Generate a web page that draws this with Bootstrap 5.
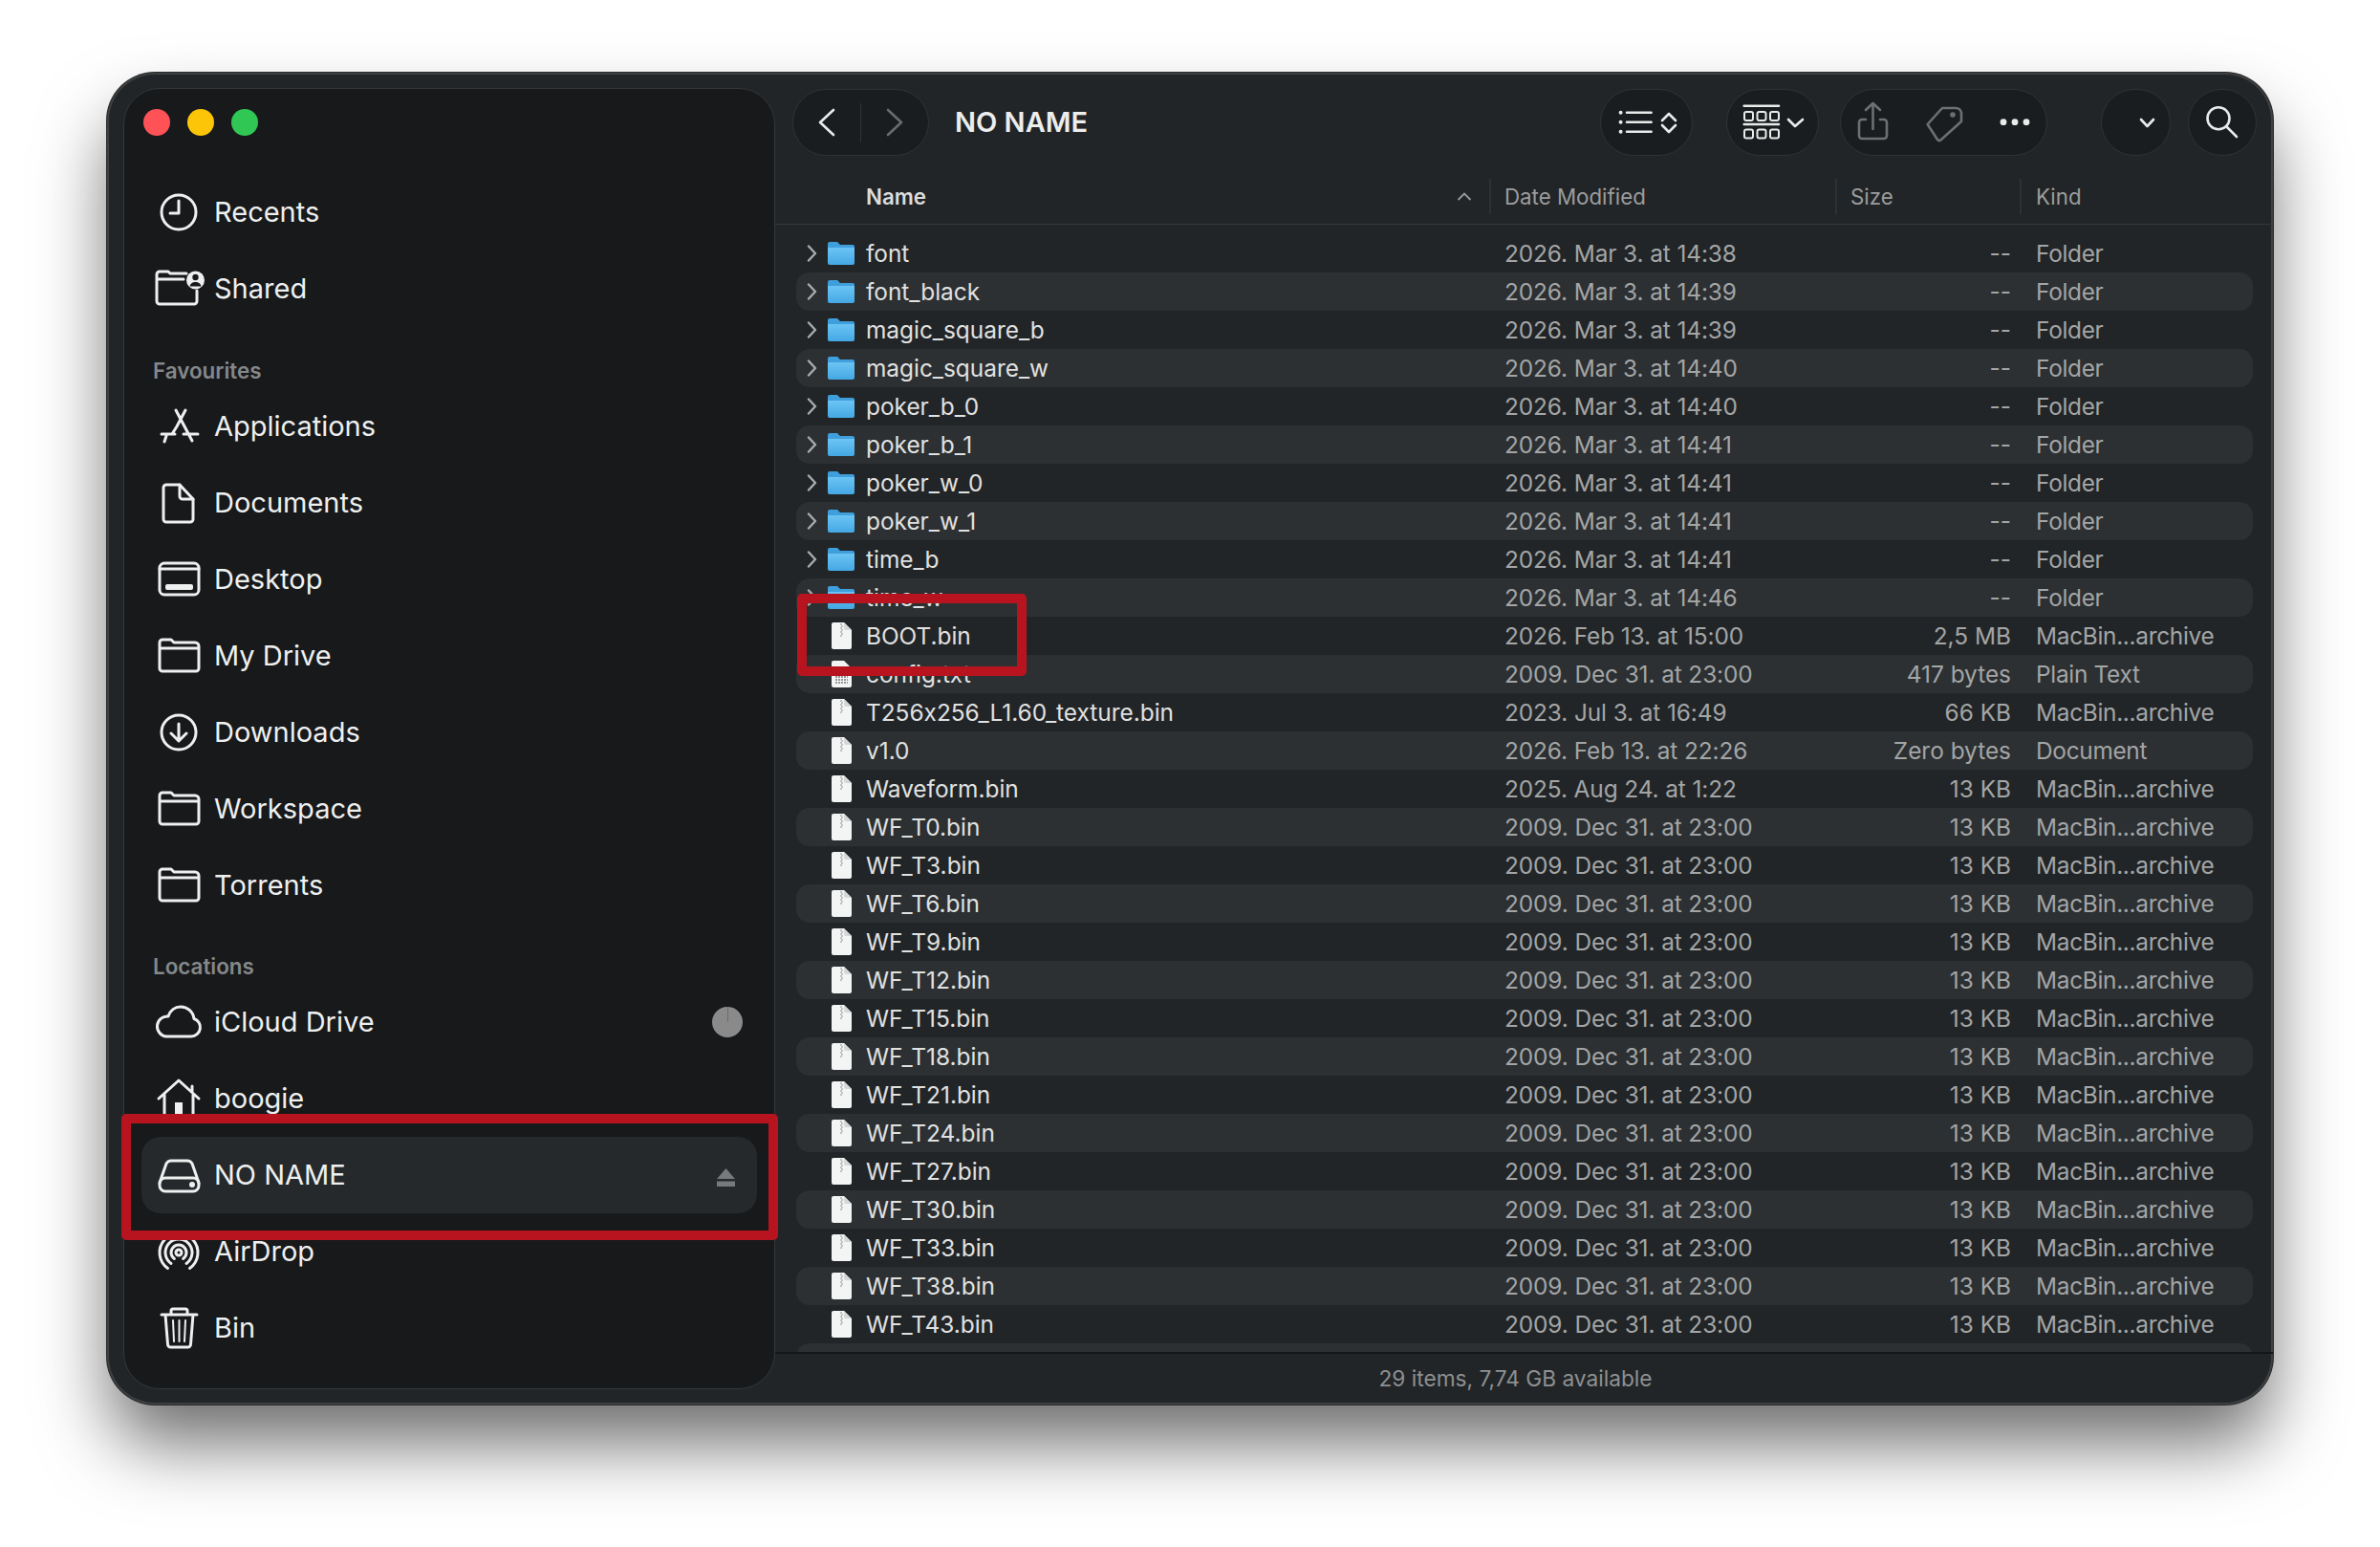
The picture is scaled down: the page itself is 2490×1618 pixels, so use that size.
<!DOCTYPE html>
<html lang="en">
<head>
    <meta charset="UTF-8">
    <title>NO NAME</title>
    <link href="https://cdn.jsdelivr.net/npm/bootstrap@5.3.0/dist/css/bootstrap.min.css" rel="stylesheet">
    <style>
        html, body { height: 100%; }
        body { background: #fff; font-family: Inter, "Liberation Sans", sans-serif; font-variant-ligatures: no-contextual; overflow: hidden; }
        .mac-window { width: 2266px; height: 1393px; margin: 76px 0 0 112px; background: #222527; border-radius: 50px; box-shadow: inset 0 0 0 2px #3d3f41, 0 0 0 1px #2a2a2a, 0 44px 76px -4px rgba(0,0,0,.58); }
        .side-panel { width: 682px; margin: 16px 0 16px 17px; background: #17191b; border: 1px solid #34383a; border-radius: 38px; padding: 21px 18px 0; flex: none; }
        .lights { height: 28px; margin: 0 0 40px 2px; gap: 18px; }
        .light { width: 28px; height: 28px; border-radius: 50%; }
        .light-red { background: #ff5257; }
        .light-yellow { background: #fdc507; }
        .light-green { background: #31c755; }
        .side-item { height: 80px; padding: 0 15px 0 13px; gap: 11px; color: #eef0f0; font-size: 29px; border-radius: 20px; text-decoration: none; }
        .side-item svg { width: 52px; height: 44px; flex: none; fill: none; stroke: #eef0f0; stroke-width: 3; stroke-linecap: round; stroke-linejoin: round; overflow: visible; }
        .side-item.active { background: #25292b; }
        .side-head { height: 64px; padding: 28px 0 0 12px; color: #85888a; font-size: 22.4px; font-weight: 600; line-height: 36px; }
        .side-head-loc { height: 63px; padding-top: 27px; }
        .side-progress { width: 32px; height: 32px; background: linear-gradient(#6b6b6b, #6b6b6b) center top / 1px 50% no-repeat, #8a8a8a; border-radius: 50%; }
        .main-panel { min-width: 0; }
        .toolbar { height: 101px; padding: 17px 17px 0 18px; flex: none; }
        .tool-pill { height: 70px; background: #1a1d1f; border: 1px solid #303335; border-radius: 35px; flex: none; }
        .tool-pill svg { display: block; fill: none; stroke: #e9eaea; stroke-width: 2.6; stroke-linecap: round; stroke-linejoin: round; }
        .nav-pill { width: 143px; }
        .nav-pill .btn { width: 70px; }
        .nav-split { width: 1px; height: 41px; background: #303335; }
        .win-title { height: 70px; margin-left: 27px; color: #eceded; font-size: 29px; font-weight: 600; }
        .ms-view { margin-left: 35px; }
        .ms-share { margin-left: 22px; }
        .ms-more { margin-left: 56px; }
        .ms-search { margin-left: 18px; }
        .table-head { height: 58px; padding-left: 95px; color: #9b9d9e; font-size: 22.3px; border-bottom: 1px solid #35383a; flex: none; }
        .head-cell { height: 37px; }
        .head-name { width: 654px; margin-right: 14px; padding-right: 18px; color: #dcdddd; font-weight: 600; border-right: 2px solid #2e3133; }
        .head-date { width: 348px; margin-right: 14px; border-right: 2px solid #2e3133; }
        .head-size { width: 179px; margin-right: 15px; border-right: 2px solid #2e3133; }
        .file-list { margin: 0 21px 0 22px; padding-top: 10px; min-height: 0; }
        .file-row { height: 40px; flex: none; border-radius: 14px; color: #a3a5a6; font-size: 24.4px; white-space: nowrap; }
        .file-row:nth-child(even) { background: #2c3032; }
        .row-arrow { width: 16px; margin-left: 9px; flex: none; }
        .row-icon { width: 28px; margin: 0 12px 0 8px; flex: none; display: flex; justify-content: center; }
        .cell-name { width: 668px; color: #e0e1e1; flex: none; }
        .cell-date { width: 380px; flex: none; letter-spacing: -.1px; }
        .cell-size { width: 150px; flex: none; }
        .cell-kind { margin-left: 26px; letter-spacing: -.3px; }
        .status-bar { height: 55px; padding-right: 18px; margin-top: auto; color: #8e9091; font-size: 22.7px; border-top: 2px solid #131517; flex: none; }
        .mark-box { position: absolute; border: 10px solid #b8141f; border-radius: 5px; pointer-events: none; }
        .mark-side { left: 15px; top: 1089px; width: 687px; height: 132px; }
        .mark-file { left: 722px; top: 545px; width: 240px; height: 86px; }
    </style>
</head>
<body>
    <svg width="0" height="0" class="position-absolute">
        <defs>
            <linearGradient id="blueFront" x1="0" y1="0" x2="0" y2="1">
                <stop offset="0" stop-color="#6cc4f4"/>
                <stop offset="1" stop-color="#44a8e4"/>
            </linearGradient>
            <symbol id="i-arrow" viewBox="0 0 16 18"><path d="M4 1.500 11 9 4 16.500" fill="none" stroke="#a9abac" stroke-width="2.400" stroke-linecap="round" stroke-linejoin="round"/></symbol>
            <symbol id="i-blue" viewBox="0 0 28 24"><path d="M2 0h8l3 3h13a2 2 0 0 1 2 2v6H0V2a2 2 0 0 1 2-2z" fill="#3f9fdc"/><path d="M0 6h28v16a2 2 0 0 1-2 2H2a2 2 0 0 1-2-2z" fill="url(#blueFront)"/></symbol>
            <symbol id="i-doc" viewBox="0 0 21 28"><path d="M2 0h11l8 8v18a2 2 0 0 1-2 2H2a2 2 0 0 1-2-2V2a2 2 0 0 1 2-2z" fill="#f3f4f4"/><path d="M13 0l8 8h-6a2 2 0 0 1-2-2z" fill="#d5d7d8"/><path d="M9 2h2M10 4h2M9 6h2M10 8h2M9 10h2M10 12h2M9 14h2" stroke="#8e9092" stroke-width="1.200"/></symbol>
            <symbol id="i-txt" viewBox="0 0 21 28"><path d="M2 0h11l8 8v18a2 2 0 0 1-2 2H2a2 2 0 0 1-2-2V2a2 2 0 0 1 2-2z" fill="#f3f4f4"/><path d="M4 8h9M4 11h13M4 14h13M4 17h13M4 20h13M4 23h13" stroke="#77797b" stroke-width="1.400" stroke-dasharray="2 1"/></symbol>
            <symbol id="i-folder" viewBox="0 0 52 44"><path d="M9 5h9l3 3h22a4 4 0 0 1 4 4v23a3 3 0 0 1-3 3H9a3 3 0 0 1-3-3V8a3 3 0 0 1 3-3z"/><path d="M7 14h39"/></symbol>
        </defs>
    </svg>

    <div class="mac-window d-flex position-relative">
        <aside class="side-panel d-flex flex-column overflow-hidden">
            <div class="lights d-flex">
                <span class="light light-red"></span>
                <span class="light light-yellow"></span>
                <span class="light light-green"></span>
            </div>
            <nav class="nav flex-column flex-nowrap">
                <a class="side-item d-flex align-items-center" href="#">
                    <svg viewBox="0 0 52 44"><circle cx="26" cy="22" r="18"/><path d="M26 10v13h-9"/></svg>Recents
                </a>
                <a class="side-item d-flex align-items-center" href="#">
                    <svg viewBox="0 0 52 44"><path d="M34 6H17l-2-2H6a3 3 0 0 0-3 3v28a3 3 0 0 0 3 3h36a3 3 0 0 0 3-3V24"/><path d="M4 12h27"/><circle cx="43.500" cy="13" r="9.500" fill="#eef0f0" stroke="none"/><circle cx="43.500" cy="10" r="3.200" fill="#17191b" stroke="none"/><path d="M37.500 19.500c1-3.500 3.200-4.500 6-4.500s5 1 6 4.500" fill="#17191b" stroke="none"/></svg>Shared
                </a>
                <div class="side-head">Favourites</div>
                <a class="side-item d-flex align-items-center" href="#">
                    <svg viewBox="0 0 52 44"><path d="M23 5l17 32M33 5l-9 17-5 8M13 32l-2 6M8 30h14M31 30h15"/></svg>Applications
                </a>
                <a class="side-item d-flex align-items-center" href="#">
                    <svg viewBox="0 0 52 44"><path d="M13 3h14l14 15v21a3 3 0 0 1-3 3H13a3 3 0 0 1-3-3V6a3 3 0 0 1 3-3z"/><path d="M27 3v12a3 3 0 0 0 3 3h11"/></svg>Documents
                </a>
                <a class="side-item d-flex align-items-center" href="#">
                    <svg viewBox="0 0 52 44"><rect x="6" y="5" width="41" height="33" rx="5"/><path d="M6 11h41"/><rect x="12" y="27" width="29" height="6" rx="2" fill="#eef0f0" stroke="none"/></svg>Desktop
                </a>
                <a class="side-item d-flex align-items-center" href="#"><svg><use href="#i-folder"/></svg>My Drive</a>
                <a class="side-item d-flex align-items-center" href="#">
                    <svg viewBox="0 0 52 44"><circle cx="26" cy="22" r="18"/><path d="M26 13v18M18 23l8 8 8-8"/></svg>Downloads
                </a>
                <a class="side-item d-flex align-items-center" href="#"><svg><use href="#i-folder"/></svg>Workspace</a>
                <a class="side-item d-flex align-items-center" href="#"><svg><use href="#i-folder"/></svg>Torrents</a>
                <div class="side-head side-head-loc">Locations</div>
                <a class="side-item d-flex align-items-center" href="#">
                    <svg viewBox="0 0 52 44"><path d="M13 37h26a9.500 9.500 0 0 0 3-18.500C41 11 35 6 28 6c-6 0-11 4-13 10a10.500 10.500 0 0 0-2 21z"/></svg>iCloud Drive
                    <span class="side-progress ms-auto"></span>
                </a>
                <a class="side-item d-flex align-items-center" href="#">
                    <svg viewBox="0 0 52 44"><path d="M5 22 26 3l21 19M40 9v6M11 18v25h30V18"/><rect x="22" y="26" width="8" height="17" fill="#eef0f0" stroke="none"/></svg>boogie
                </a>
                <a class="side-item active d-flex align-items-center" href="#">
                    <svg viewBox="0 0 52 44"><path d="M6 30l7-20a6 6 0 0 1 5-3h17a6 6 0 0 1 5 3l7 20"/><rect x="6" y="25" width="41" height="14" rx="6"/><circle cx="40" cy="32" r="1.500" fill="#eef0f0"/></svg>NO NAME
                    <svg class="ms-auto" viewBox="0 0 52 44"><path d="M25 26h19l-9.500-11zM25 28.500h19V34H25z" fill="#77797b" stroke="none"/></svg>
                </a>
                <a class="side-item d-flex align-items-center" href="#">
                    <svg viewBox="0 0 52 44" stroke-width="2.200"><g transform="translate(0 2)"><circle cx="26" cy="21" r="3"/><path d="M21.400 27.500a8 8 0 1 1 9.200 0M18 32.500a14 14 0 1 1 16 0M14.500 37.400a20 20 0 1 1 23 0"/></g></svg>AirDrop
                </a>
                <a class="side-item d-flex align-items-center" href="#">
                    <svg viewBox="0 0 52 44"><path d="M8 8h37M18 8V4a2 2 0 0 1 2-2h13a2 2 0 0 1 2 2v4M12 8l2.500 31a3 3 0 0 0 3 3h18a3 3 0 0 0 3-3L41 8"/><path d="M20 14l1 22M26.500 14v22M33 14l-1 22" stroke-width="2"/></svg>Bin
                </a>
            </nav>
        </aside>

        <main class="main-panel flex-grow-1 d-flex flex-column">
            <div class="toolbar d-flex align-items-start">
                <div class="tool-pill nav-pill d-flex align-items-center">
                    <button class="btn p-0 border-0 d-flex justify-content-center" type="button"><svg width="20" height="30" viewBox="0 0 20 30"><path d="M17 2 3 15l14 13"/></svg></button>
                    <span class="nav-split"></span>
                    <button class="btn p-0 border-0 d-flex justify-content-center" type="button"><svg width="20" height="30" viewBox="0 0 20 30"><path d="M3 2l14 13L3 28" stroke="#696b6c"/></svg></button>
                </div>
                <div class="win-title d-flex align-items-center">NO NAME</div>
                <div class="tool-pill ms-auto">
                    <svg width="95" height="68" viewBox="1 1 95 68"><path d="M21.600 24.700v.01M21.600 34.700v.01M21.600 44.700v.01" stroke-width="4"/><path d="M28 24.700h25.600M28 34.700h25.600M28 44.700h25.600M65 33l7-7 7 7M65 38l7 7 7-7"/></svg>
                </div>
                <div class="tool-pill ms-view">
                    <svg width="95" height="68" viewBox="1 1 95 68"><path d="M18.700 17.700H55M18.700 37H55M65 32l7 7 8-7"/><g stroke-width="2"><rect x="19" y="24" width="9" height="9" rx="2"/><rect x="32.500" y="24" width="9" height="9" rx="2"/><rect x="46" y="24" width="9" height="9" rx="2"/><rect x="19" y="42.500" width="9" height="9" rx="2"/><rect x="32.500" y="42.500" width="9" height="9" rx="2"/><rect x="46" y="42.500" width="9" height="9" rx="2"/></g></svg>
                </div>
                <div class="tool-pill ms-share">
                    <svg width="215" height="68" viewBox="1 1 215 68"><g stroke="#6d6f70"><path d="M27 32h-4a3 3 0 0 0-3 3v14a3 3 0 0 0 3 3h23a3 3 0 0 0 3-3V35a3 3 0 0 0-3-3h-4M34.500 42V16M27 22l7.500-7 7.500 7"/><path d="M91.600 37 107 20h14q5 0 6 5v9L106 53q-2 2-4 0z"/><circle cx="118" cy="27" r="1.500"/></g><g fill="#e9eaea" stroke="none"><circle cx="171" cy="34.700" r="3.400"/><circle cx="183" cy="34.700" r="3.400"/><circle cx="195" cy="34.700" r="3.400"/></g></svg>
                </div>
                <div class="tool-pill ms-more">
                    <svg width="71" height="68" viewBox="1 1 71 68"><path d="M42 32l6.500 7 6.500-7"/></svg>
                </div>
                <div class="tool-pill ms-search">
                    <svg width="70" height="68" viewBox="1 1 70 68" stroke-width="3"><circle cx="32" cy="30.700" r="11.500"/><path d="M41 40l10 10"/></svg>
                </div>
            </div>

            <div class="table-head d-flex align-items-center">
                <div class="head-cell head-name d-flex align-items-center justify-content-between">Name <svg width="16" height="9" viewBox="0 0 16 9"><path d="M1.500 8 8 1.500 14.500 8" fill="none" stroke="#999b9c" stroke-width="1.800"/></svg></div>
                <div class="head-cell head-date d-flex align-items-center">Date Modified</div>
                <div class="head-cell head-size d-flex align-items-center">Size</div>
                <div class="head-cell d-flex align-items-center">Kind</div>
            </div>

            <div class="file-list flex-grow-1 d-flex flex-column overflow-hidden">
                <div class="file-row d-flex align-items-center"><svg class="row-arrow" height="18"><use href="#i-arrow"/></svg><span class="row-icon"><svg width="28" height="24"><use href="#i-blue"/></svg></span><span class="cell-name">font</span><span class="cell-date">2026. Mar 3. at 14:38</span><span class="cell-size text-end">--</span><span class="cell-kind">Folder</span></div>
                <div class="file-row d-flex align-items-center"><svg class="row-arrow" height="18"><use href="#i-arrow"/></svg><span class="row-icon"><svg width="28" height="24"><use href="#i-blue"/></svg></span><span class="cell-name">font_black</span><span class="cell-date">2026. Mar 3. at 14:39</span><span class="cell-size text-end">--</span><span class="cell-kind">Folder</span></div>
                <div class="file-row d-flex align-items-center"><svg class="row-arrow" height="18"><use href="#i-arrow"/></svg><span class="row-icon"><svg width="28" height="24"><use href="#i-blue"/></svg></span><span class="cell-name">magic_square_b</span><span class="cell-date">2026. Mar 3. at 14:39</span><span class="cell-size text-end">--</span><span class="cell-kind">Folder</span></div>
                <div class="file-row d-flex align-items-center"><svg class="row-arrow" height="18"><use href="#i-arrow"/></svg><span class="row-icon"><svg width="28" height="24"><use href="#i-blue"/></svg></span><span class="cell-name">magic_square_w</span><span class="cell-date">2026. Mar 3. at 14:40</span><span class="cell-size text-end">--</span><span class="cell-kind">Folder</span></div>
                <div class="file-row d-flex align-items-center"><svg class="row-arrow" height="18"><use href="#i-arrow"/></svg><span class="row-icon"><svg width="28" height="24"><use href="#i-blue"/></svg></span><span class="cell-name">poker_b_0</span><span class="cell-date">2026. Mar 3. at 14:40</span><span class="cell-size text-end">--</span><span class="cell-kind">Folder</span></div>
                <div class="file-row d-flex align-items-center"><svg class="row-arrow" height="18"><use href="#i-arrow"/></svg><span class="row-icon"><svg width="28" height="24"><use href="#i-blue"/></svg></span><span class="cell-name">poker_b_1</span><span class="cell-date">2026. Mar 3. at 14:41</span><span class="cell-size text-end">--</span><span class="cell-kind">Folder</span></div>
                <div class="file-row d-flex align-items-center"><svg class="row-arrow" height="18"><use href="#i-arrow"/></svg><span class="row-icon"><svg width="28" height="24"><use href="#i-blue"/></svg></span><span class="cell-name">poker_w_0</span><span class="cell-date">2026. Mar 3. at 14:41</span><span class="cell-size text-end">--</span><span class="cell-kind">Folder</span></div>
                <div class="file-row d-flex align-items-center"><svg class="row-arrow" height="18"><use href="#i-arrow"/></svg><span class="row-icon"><svg width="28" height="24"><use href="#i-blue"/></svg></span><span class="cell-name">poker_w_1</span><span class="cell-date">2026. Mar 3. at 14:41</span><span class="cell-size text-end">--</span><span class="cell-kind">Folder</span></div>
                <div class="file-row d-flex align-items-center"><svg class="row-arrow" height="18"><use href="#i-arrow"/></svg><span class="row-icon"><svg width="28" height="24"><use href="#i-blue"/></svg></span><span class="cell-name">time_b</span><span class="cell-date">2026. Mar 3. at 14:41</span><span class="cell-size text-end">--</span><span class="cell-kind">Folder</span></div>
                <div class="file-row d-flex align-items-center"><svg class="row-arrow" height="18"><use href="#i-arrow"/></svg><span class="row-icon"><svg width="28" height="24"><use href="#i-blue"/></svg></span><span class="cell-name">time_w</span><span class="cell-date">2026. Mar 3. at 14:46</span><span class="cell-size text-end">--</span><span class="cell-kind">Folder</span></div>
                <div class="file-row d-flex align-items-center"><span class="row-arrow"></span><span class="row-icon"><svg width="21" height="28"><use href="#i-doc"/></svg></span><span class="cell-name">BOOT.bin</span><span class="cell-date">2026. Feb 13. at 15:00</span><span class="cell-size text-end">2,5 MB</span><span class="cell-kind">MacBin...archive</span></div>
                <div class="file-row d-flex align-items-center"><span class="row-arrow"></span><span class="row-icon"><svg width="21" height="28"><use href="#i-txt"/></svg></span><span class="cell-name">config.txt</span><span class="cell-date">2009. Dec 31. at 23:00</span><span class="cell-size text-end">417 bytes</span><span class="cell-kind">Plain Text</span></div>
                <div class="file-row d-flex align-items-center"><span class="row-arrow"></span><span class="row-icon"><svg width="21" height="28"><use href="#i-doc"/></svg></span><span class="cell-name">T256x256_L1.60_texture.bin</span><span class="cell-date">2023. Jul 3. at 16:49</span><span class="cell-size text-end">66 KB</span><span class="cell-kind">MacBin...archive</span></div>
                <div class="file-row d-flex align-items-center"><span class="row-arrow"></span><span class="row-icon"><svg width="21" height="28"><use href="#i-doc"/></svg></span><span class="cell-name">v1.0</span><span class="cell-date">2026. Feb 13. at 22:26</span><span class="cell-size text-end">Zero bytes</span><span class="cell-kind">Document</span></div>
                <div class="file-row d-flex align-items-center"><span class="row-arrow"></span><span class="row-icon"><svg width="21" height="28"><use href="#i-doc"/></svg></span><span class="cell-name">Waveform.bin</span><span class="cell-date">2025. Aug 24. at 1:22</span><span class="cell-size text-end">13 KB</span><span class="cell-kind">MacBin...archive</span></div>
                <div class="file-row d-flex align-items-center"><span class="row-arrow"></span><span class="row-icon"><svg width="21" height="28"><use href="#i-doc"/></svg></span><span class="cell-name">WF_T0.bin</span><span class="cell-date">2009. Dec 31. at 23:00</span><span class="cell-size text-end">13 KB</span><span class="cell-kind">MacBin...archive</span></div>
                <div class="file-row d-flex align-items-center"><span class="row-arrow"></span><span class="row-icon"><svg width="21" height="28"><use href="#i-doc"/></svg></span><span class="cell-name">WF_T3.bin</span><span class="cell-date">2009. Dec 31. at 23:00</span><span class="cell-size text-end">13 KB</span><span class="cell-kind">MacBin...archive</span></div>
                <div class="file-row d-flex align-items-center"><span class="row-arrow"></span><span class="row-icon"><svg width="21" height="28"><use href="#i-doc"/></svg></span><span class="cell-name">WF_T6.bin</span><span class="cell-date">2009. Dec 31. at 23:00</span><span class="cell-size text-end">13 KB</span><span class="cell-kind">MacBin...archive</span></div>
                <div class="file-row d-flex align-items-center"><span class="row-arrow"></span><span class="row-icon"><svg width="21" height="28"><use href="#i-doc"/></svg></span><span class="cell-name">WF_T9.bin</span><span class="cell-date">2009. Dec 31. at 23:00</span><span class="cell-size text-end">13 KB</span><span class="cell-kind">MacBin...archive</span></div>
                <div class="file-row d-flex align-items-center"><span class="row-arrow"></span><span class="row-icon"><svg width="21" height="28"><use href="#i-doc"/></svg></span><span class="cell-name">WF_T12.bin</span><span class="cell-date">2009. Dec 31. at 23:00</span><span class="cell-size text-end">13 KB</span><span class="cell-kind">MacBin...archive</span></div>
                <div class="file-row d-flex align-items-center"><span class="row-arrow"></span><span class="row-icon"><svg width="21" height="28"><use href="#i-doc"/></svg></span><span class="cell-name">WF_T15.bin</span><span class="cell-date">2009. Dec 31. at 23:00</span><span class="cell-size text-end">13 KB</span><span class="cell-kind">MacBin...archive</span></div>
                <div class="file-row d-flex align-items-center"><span class="row-arrow"></span><span class="row-icon"><svg width="21" height="28"><use href="#i-doc"/></svg></span><span class="cell-name">WF_T18.bin</span><span class="cell-date">2009. Dec 31. at 23:00</span><span class="cell-size text-end">13 KB</span><span class="cell-kind">MacBin...archive</span></div>
                <div class="file-row d-flex align-items-center"><span class="row-arrow"></span><span class="row-icon"><svg width="21" height="28"><use href="#i-doc"/></svg></span><span class="cell-name">WF_T21.bin</span><span class="cell-date">2009. Dec 31. at 23:00</span><span class="cell-size text-end">13 KB</span><span class="cell-kind">MacBin...archive</span></div>
                <div class="file-row d-flex align-items-center"><span class="row-arrow"></span><span class="row-icon"><svg width="21" height="28"><use href="#i-doc"/></svg></span><span class="cell-name">WF_T24.bin</span><span class="cell-date">2009. Dec 31. at 23:00</span><span class="cell-size text-end">13 KB</span><span class="cell-kind">MacBin...archive</span></div>
                <div class="file-row d-flex align-items-center"><span class="row-arrow"></span><span class="row-icon"><svg width="21" height="28"><use href="#i-doc"/></svg></span><span class="cell-name">WF_T27.bin</span><span class="cell-date">2009. Dec 31. at 23:00</span><span class="cell-size text-end">13 KB</span><span class="cell-kind">MacBin...archive</span></div>
                <div class="file-row d-flex align-items-center"><span class="row-arrow"></span><span class="row-icon"><svg width="21" height="28"><use href="#i-doc"/></svg></span><span class="cell-name">WF_T30.bin</span><span class="cell-date">2009. Dec 31. at 23:00</span><span class="cell-size text-end">13 KB</span><span class="cell-kind">MacBin...archive</span></div>
                <div class="file-row d-flex align-items-center"><span class="row-arrow"></span><span class="row-icon"><svg width="21" height="28"><use href="#i-doc"/></svg></span><span class="cell-name">WF_T33.bin</span><span class="cell-date">2009. Dec 31. at 23:00</span><span class="cell-size text-end">13 KB</span><span class="cell-kind">MacBin...archive</span></div>
                <div class="file-row d-flex align-items-center"><span class="row-arrow"></span><span class="row-icon"><svg width="21" height="28"><use href="#i-doc"/></svg></span><span class="cell-name">WF_T38.bin</span><span class="cell-date">2009. Dec 31. at 23:00</span><span class="cell-size text-end">13 KB</span><span class="cell-kind">MacBin...archive</span></div>
                <div class="file-row d-flex align-items-center"><span class="row-arrow"></span><span class="row-icon"><svg width="21" height="28"><use href="#i-doc"/></svg></span><span class="cell-name">WF_T43.bin</span><span class="cell-date">2009. Dec 31. at 23:00</span><span class="cell-size text-end">13 KB</span><span class="cell-kind">MacBin...archive</span></div>
                <div class="file-row"></div>
            </div>

            <div class="status-bar d-flex align-items-center justify-content-center">29 items, 7,74 GB available</div>
        </main>

        <div class="mark-box mark-side"></div>
        <div class="mark-box mark-file"></div>
    </div>

    <script src="https://cdn.jsdelivr.net/npm/bootstrap@5.3.0/dist/js/bootstrap.bundle.min.js"></script>
</body>
</html>
